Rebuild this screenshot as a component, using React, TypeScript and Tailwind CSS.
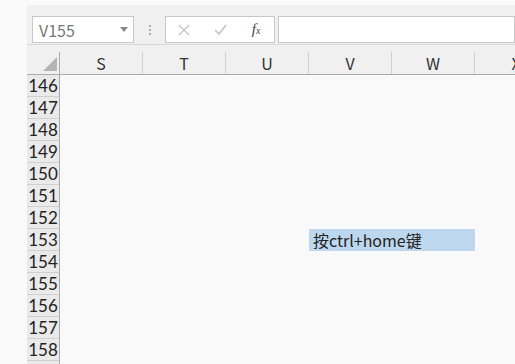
const cols = ["S", "T", "U", "V", "W", "X"];
const rows = [146, 147, 148, 149, 150, 151, 152, 153, 154, 155, 156, 157, 158, 159];

const font = { fontFamily: '"Noto Sans CJK SC", "Liberation Sans", sans-serif' };
const num = { fontFamily: 'Lato, "Liberation Sans", sans-serif' };

export default function App() {
  return (
    <div className="w-[515px] h-[364px] overflow-hidden bg-[#fafafa] pl-[27px] pt-[5px]" style={font}>
      <div className="h-[359px] bg-[#f0f0f0] flex flex-col overflow-hidden">
        {/* formula bar */}
        <div className="shrink-0 flex items-start h-[40px] pt-[11px] pl-[5px] border-b border-[#d8d8d8]">
          <div className="w-[102px] h-[27px] bg-white border border-[#c8c8c8] flex items-center justify-between pl-[6px] pr-[5px]">
            <span className="text-[16px] text-[#777] leading-none">V155</span>
            <svg width="8" height="5" viewBox="0 0 8 5"><path d="M0 0h8L4 5z" fill="#888" /></svg>
          </div>
          <div className="w-[31px] h-[27px] flex flex-col items-center justify-center gap-[2px]">
            <span className="w-[2px] h-[2px] bg-[#b0b0b0]" />
            <span className="w-[2px] h-[2px] bg-[#b0b0b0]" />
            <span className="w-[2px] h-[2px] bg-[#b0b0b0]" />
          </div>
          <div className="w-[110px] h-[27px] bg-white border border-[#c8c8c8] flex items-center">
            <div className="w-[37px] flex justify-center">
              <svg width="12" height="12" viewBox="0 0 12 12"><path d="M1 1l10 10M11 1L1 11" stroke="#c4c4c4" strokeWidth="1.3" /></svg>
            </div>
            <div className="w-[36px] flex justify-center">
              <svg width="13" height="11" viewBox="0 0 13 11"><path d="M1 6l4 4L12 1" stroke="#c4c4c4" strokeWidth="1.6" fill="none" /></svg>
            </div>
            <div className="w-[36px] flex justify-center">
              <span className="italic text-[15px] text-[#444] leading-none" style={{ fontFamily: '"Liberation Serif", serif' }}>
                f<span className="text-[10px]">x</span>
              </span>
            </div>
          </div>
          <div className="flex-1 ml-[3px] h-[27px] bg-white border border-[#c8c8c8]" />
        </div>
        {/* column headers */}
        <div className="shrink-0 flex h-[30px] bg-[#f0f0f0] border-b border-[#ababab] pt-[7px]">
          <div className="w-[33px] shrink-0 flex items-end justify-end pr-[2px] pb-[3px] border-r border-[#ababab]">
            <svg width="14" height="14" viewBox="0 0 14 14"><path d="M14 0V14H0z" fill="#b4b4b4" /></svg>
          </div>
          {cols.map((c) => (
            <div key={c} className="w-[83px] shrink-0 flex items-center justify-center text-[16px] text-[#333] border-r border-[#d0d0d0] leading-none">
              {c}
            </div>
          ))}
        </div>
        {/* grid */}
        <div className="flex flex-1 min-h-0 overflow-hidden bg-[#f9f9f9]">
          <div className="w-[33px] shrink-0 bg-[#eaeaea] border-r border-[#ababab] flex flex-col">
            {rows.map((r) => (
              <div key={r} className="h-[22px] shrink-0 flex items-center justify-center text-[17px] text-[#222] border-b border-[#d0d0d0] leading-none" style={num}>
                {r}
              </div>
            ))}
          </div>
          <div className="flex flex-col">
            {rows.map((r) => (
              <div key={r} className="h-[22px] shrink-0 flex">
                <div className="w-[249px] shrink-0" />
                {r === 153 && (
                  <div className="w-[166px] h-[22px] bg-[#bdd7ee] flex items-center pl-[4px] text-[16px] text-[#222] leading-none">
                    按ctrl+home键
                  </div>
                )}
              </div>
            ))}
          </div>
        </div>
      </div>
    </div>
  );
}
